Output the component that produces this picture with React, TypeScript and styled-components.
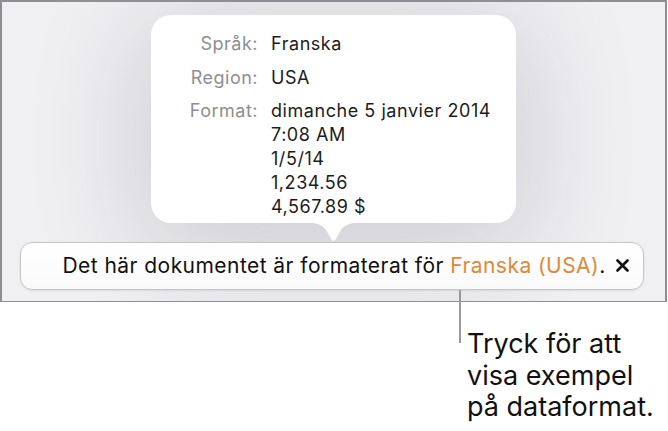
import React from "react";
import styled, { createGlobalStyle } from "styled-components";

const GlobalStyle = createGlobalStyle`
    html, body {
        margin: 0;
        padding: 0;
        background: #ffffff;
    }
    body {
        font-family: Inter, "Noto Sans", "Liberation Sans", sans-serif;
        -webkit-font-smoothing: antialiased;
    }
`;

type Row = { label: string; values: string[] };

const rows: Row[] = [
    { label: "Språk:", values: ["Franska"] },
    { label: "Region:", values: ["USA"] },
    {
        label: "Format:",
        values: ["dimanche 5 janvier 2014", "7:08 AM", "1/5/14", "1,234.56", "4,567.89 $"],
    },
];

const App = () => {
    return (
        <>
            <GlobalStyle />
            <Screen>
                <Popover>
                    <Card>
                        {rows.map((row) => (
                            <React.Fragment key={row.label}>
                                <Label>{row.label}</Label>
                                <Values>
                                    {row.values.map((v) => (
                                        <Value key={v}>{v}</Value>
                                    ))}
                                </Values>
                            </React.Fragment>
                        ))}
                    </Card>
                    <Pointer width="47" height="19" viewBox="0 0 47 19">
                        <path d="M0 0 C8 0 12 2 16 7 L21.5 16.5 C22.6 18.4 24.4 18.4 25.5 16.5 L31 7 C35 2 39 0 47 0 Z" fill="#ffffff" />
                    </Pointer>
                </Popover>
                <Banner>
                    <BannerText>
                        Det här dokumentet är formaterat för <Link>Franska (USA)</Link>.
                    </BannerText>
                    <Close aria-label="Stäng">
                        <svg width="13" height="13" viewBox="0 0 13 13">
                            <path d="M1.5 1.5 L11.5 11.5 M11.5 1.5 L1.5 11.5" stroke="#111" strokeWidth="2.6" strokeLinecap="round" />
                        </svg>
                    </Close>
                </Banner>
            </Screen>
            <Callout>
                <Leader />
                <Caption>
                    Tryck för att
                    <br />
                    visa exempel
                    <br />
                    på dataformat.
                </Caption>
            </Callout>
        </>
    );
};

const Screen = styled.div`
    box-sizing: border-box;
    width: 667px;
    height: 302px;
    border: 2px solid #8f8f93;
    border-bottom-width: 1px;
    background: #f0f0f3;
    padding-top: 13px;
    overflow: hidden;

    display: flex;
    flex-direction: column;
    align-items: center;
`;

const Popover = styled.div`
    display: flex;
    flex-direction: column;
    align-items: center;
`;

const Card = styled.div`
    box-sizing: border-box;
    width: 365px;
    height: 208px;
    background: #ffffff;
    border-radius: 20px;
    padding: 17px 0 0 12px;
    box-shadow: 0 20px 110px 10px rgba(30, 30, 50, 0.17);

    display: grid;
    grid-template-columns: 95px 1fr;
    column-gap: 13px;
    row-gap: 9.5px;
    align-content: start;
`;

const Label = styled.div`
    text-align: right;
    color: #8e8e93;
    font-size: 18px;
    line-height: 24px;
    letter-spacing: 0.5px;
`;

const Values = styled.div`
    display: flex;
    flex-direction: column;
`;

const Value = styled.div`
    color: #1c1c1e;
    font-size: 18px;
    line-height: 24px;
    letter-spacing: 0.55px;
`;

const Pointer = styled.svg`
    display: block;
    margin-top: -0.5px;
`;

const Banner = styled.div`
    box-sizing: border-box;
    width: 624px;
    height: 48px;
    margin-left: -4px;
    background: linear-gradient(#ffffff, #fafafa);
    border: 1px solid #c4c4c8;
    border-radius: 12px;
    box-shadow: 0 1px 2px rgba(0, 0, 0, 0.08);

    display: flex;
    align-items: center;
    padding: 0 8px 0 42px;
`;

const BannerText = styled.span`
    flex: 1;
    font-size: 21px;
    letter-spacing: 0.45px;
    color: #111;
    white-space: nowrap;
`;

const Link = styled.span`
    color: #dc8a3a;
`;

const Close = styled.button`
    border: none;
    background: transparent;
    padding: 0;
    width: 24px;
    height: 24px;
    display: flex;
    align-items: center;
    justify-content: center;
    cursor: pointer;
`;

/* the leader starts at the banner's lower edge, over the screen frame */
const Callout = styled.div`
    position: relative;
    z-index: 1;
    margin: -12px 0 0 459px;
    display: flex;
    align-items: flex-start;
    gap: 6px;
`;

const Leader = styled.div`
    width: 2px;
    height: 53px;
    background: #9a9a9e;
    flex-shrink: 0;
`;

const Caption = styled.p`
    margin: 38px 0 0 0;
    font-size: 27px;
    line-height: 31.5px;
    color: #111;
`;

export default App;
